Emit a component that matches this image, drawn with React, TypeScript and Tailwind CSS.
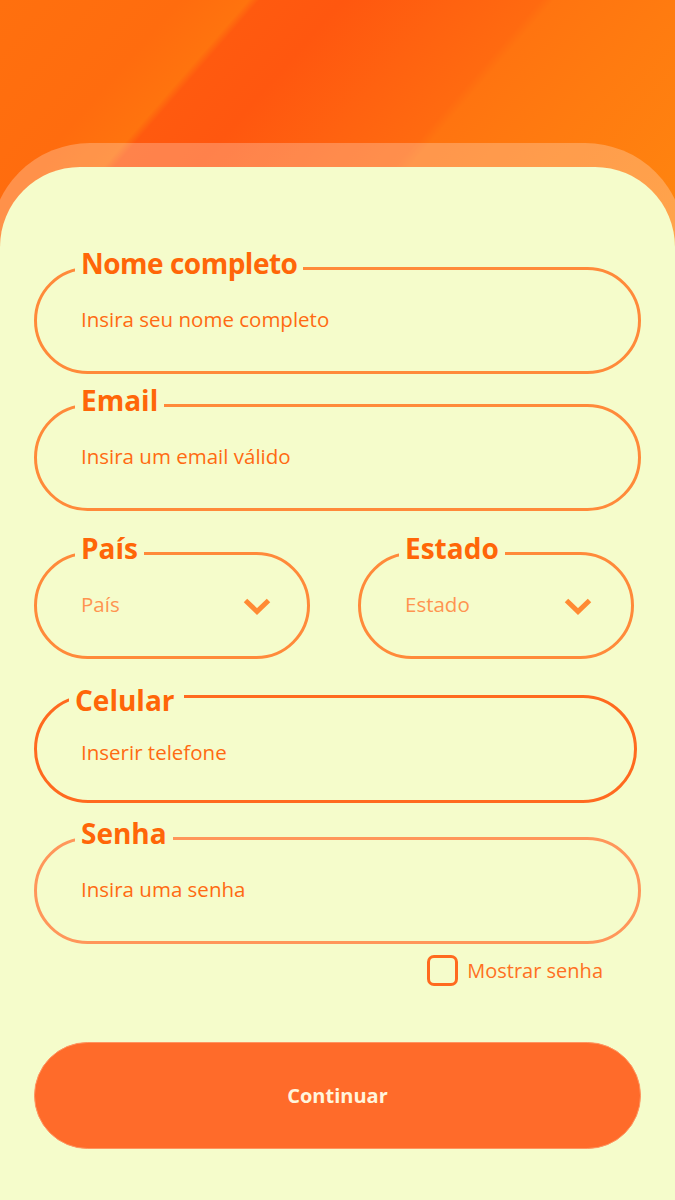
import React from "react";

function Chevron() {
  return (
    <svg width="28" height="20" viewBox="0 0 28 20" className="shrink-0 mt-[6px]">
      <path d="M2.5 3.5 L14 14.5 L25.5 3.5" fill="none" stroke="#ff8a33" strokeWidth="5" strokeLinecap="butt" strokeLinejoin="miter" />
    </svg>
  );
}

const legendCls = "px-[6px] pb-[10px] text-[28px] leading-[28px] font-bold text-[#ff6608]";
const inputCls = "h-[64px] flex items-center pl-[6px] text-[20.5px] text-[#ff6a12]";

export default function App() {
  return (
    <div className="w-full min-h-[1200px] overflow-hidden font-['Open_Sans',sans-serif] bg-[#f5fccb]">
      <div className="h-[260px] bg-[linear-gradient(131deg,#ff700e_0%,#ff6c0e_20%,#ff730e_27.6%,#ff5a0f_28.8%,#ff570f_38%,#ff6210_50%,#ff6a10_60%,#ff7410_61.5%,#ff7b10_75%,#ff860f_100%)]" />
      <div className="mt-[-117px] mx-[-10px] px-[10px] pt-[24px] rounded-t-[100px] bg-white/25">
        <div className="bg-[#f5fccb] rounded-t-[80px] min-h-[1033px] px-[34px] pt-[82px] pb-[40px]">
          {/* Nome completo */}
          <fieldset className="border-[3px] border-[#ff8a3a] rounded-[56px] pl-[38px] pr-[20px] pb-[20px]">
            <legend className={legendCls + " tracking-[-0.5px]"}>Nome completo</legend>
            <div className={inputCls}>Insira seu nome completo</div>
          </fieldset>

          {/* Email */}
          <fieldset className="mt-[12px] border-[3px] border-[#ff8a3a] rounded-[56px] pl-[38px] pr-[20px] pb-[20px]">
            <legend className={legendCls}>Email</legend>
            <div className={inputCls}>Insira um email válido</div>
          </fieldset>

          {/* País / Estado */}
          <div className="mt-[23px] flex gap-[48px]">
            <fieldset className="w-[276px] border-[3px] border-[#ff8a3a] rounded-[56px] pl-[38px] pr-[36px] pb-[20px]">
              <legend className={legendCls}>País</legend>
              <div className="h-[64px] flex items-center justify-between pl-[6px] text-[20.5px] text-[#ff9450]">
                <span>País</span>
                <Chevron />
              </div>
            </fieldset>
            <fieldset className="w-[276px] border-[3px] border-[#ff8a3a] rounded-[56px] pl-[38px] pr-[39px] pb-[20px]">
              <legend className={legendCls}>Estado</legend>
              <div className="h-[64px] flex items-center justify-between pl-[6px] text-[20.5px] text-[#ff9450]">
                <span>Estado</span>
                <Chevron />
              </div>
            </fieldset>
          </div>

          {/* Celular */}
          <fieldset className="mt-[19px] w-[603px] border-[3px] border-[#ff6a1f] rounded-[56px] pl-[32px] pr-[20px] pb-[10px]">
            <legend className="pl-[6px] pr-[9px] pt-[8px] text-[28px] leading-[28px] font-bold text-[#ff6608]">Celular</legend>
            <div className="h-[76px] flex items-center pl-[12px] text-[20.5px] text-[#ff6a12]">Inserir telefone</div>
          </fieldset>

          {/* Senha */}
          <fieldset className="mt-[16px] border-[3px] border-[#ff965a] rounded-[56px] pl-[38px] pr-[20px] pb-[20px]">
            <legend className={legendCls}>Senha</legend>
            <div className={inputCls}>Insira uma senha</div>
          </fieldset>

          {/* Mostrar senha */}
          <div className="mt-[11px] flex justify-end pr-[38px]">
            <label className="flex items-center gap-[9px] text-[20px] text-[#ff7022]">
              <span className="w-[31px] h-[31px] rounded-[7px] border-[3px] border-[#ff6a1f]" />
              <span>Mostrar senha</span>
            </label>
          </div>

          {/* Continuar */}
          <button className="mt-[56px] w-full h-[107px] rounded-full bg-[#ff6b2a] border-[1.5px] border-[#ff9460] text-[20px] font-bold text-[#fff5dc]">
            Continuar
          </button>
        </div>
      </div>
    </div>
  );
}
